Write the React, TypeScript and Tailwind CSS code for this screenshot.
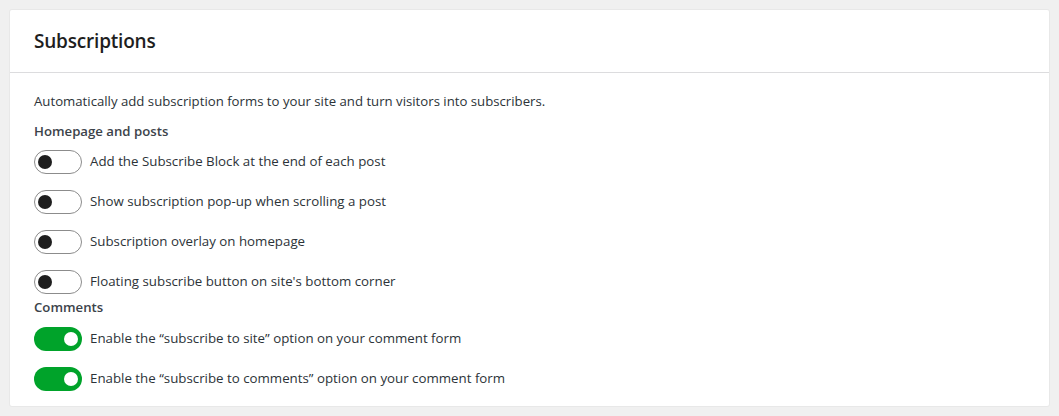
import React from 'react';

type Item = { label: string; on: boolean };

const homepage: Item[] = [
  { label: 'Add the Subscribe Block at the end of each post', on: false },
  { label: 'Show subscription pop-up when scrolling a post', on: false },
  { label: 'Subscription overlay on homepage', on: false },
  { label: "Floating subscribe button on site's bottom corner", on: false },
];

const comments: Item[] = [
  { label: 'Enable the \u201csubscribe to site\u201d option on your comment form', on: true },
  { label: 'Enable the \u201csubscribe to comments\u201d option on your comment form', on: true },
];

const Toggle: React.FC<{ on: boolean }> = ({ on }) =>
  on ? (
    <span className="w-12 h-6 rounded-full bg-[#00a32a] flex items-center justify-end pr-1 shrink-0">
      <span className="w-[14px] h-[14px] rounded-full bg-white" />
    </span>
  ) : (
    <span className="w-12 h-6 rounded-full border-[1.5px] border-[#8c8c8c] bg-white flex items-center pl-[3px] shrink-0">
      <span className="w-[14px] h-[14px] rounded-full bg-[#1e1e1e]" />
    </span>
  );

const Row: React.FC<{ item: Item }> = ({ item }) => (
  <label className="flex items-center gap-2 h-6">
    <Toggle on={item.on} />
    <span className="text-[13.3px] text-[#2c3338]">{item.label}</span>
  </label>
);

export default function App() {
  return (
    <div className="min-h-screen bg-[#f0f0f0] p-[10px]" style={{ fontFamily: '"Open Sans", "Noto Sans", sans-serif' }}>
      <div className="bg-white rounded-[2px] shadow-[0_0_0_1px_rgba(0,0,0,0.03)]">
        <div className="h-[63px] px-6 flex items-center border-b border-[#dcdcde]">
          <h2 className="text-[19px] font-semibold text-[#1e1e1e] tracking-[-0.2px]">Subscriptions</h2>
        </div>
        <div className="px-6 pt-[18px] pb-[15px]">
          <p className="text-[13.2px] leading-5 text-[#2c3338]">
            Automatically add subscription forms to your site and turn visitors into subscribers.
          </p>
          <h3 className="mt-[10px] text-[13.2px] leading-5 font-semibold text-[#3c434a]">Homepage and posts</h3>
          <div className="mt-[9px] flex flex-col gap-4">
            {homepage.map((it) => (
              <Row key={it.label} item={it} />
            ))}
          </div>
          <h3 className="mt-[3px] text-[13.2px] leading-5 font-semibold text-[#3c434a]">Comments</h3>
          <div className="mt-[10px] flex flex-col gap-4">
            {comments.map((it) => (
              <Row key={it.label} item={it} />
            ))}
          </div>
        </div>
      </div>
    </div>
  );
}
